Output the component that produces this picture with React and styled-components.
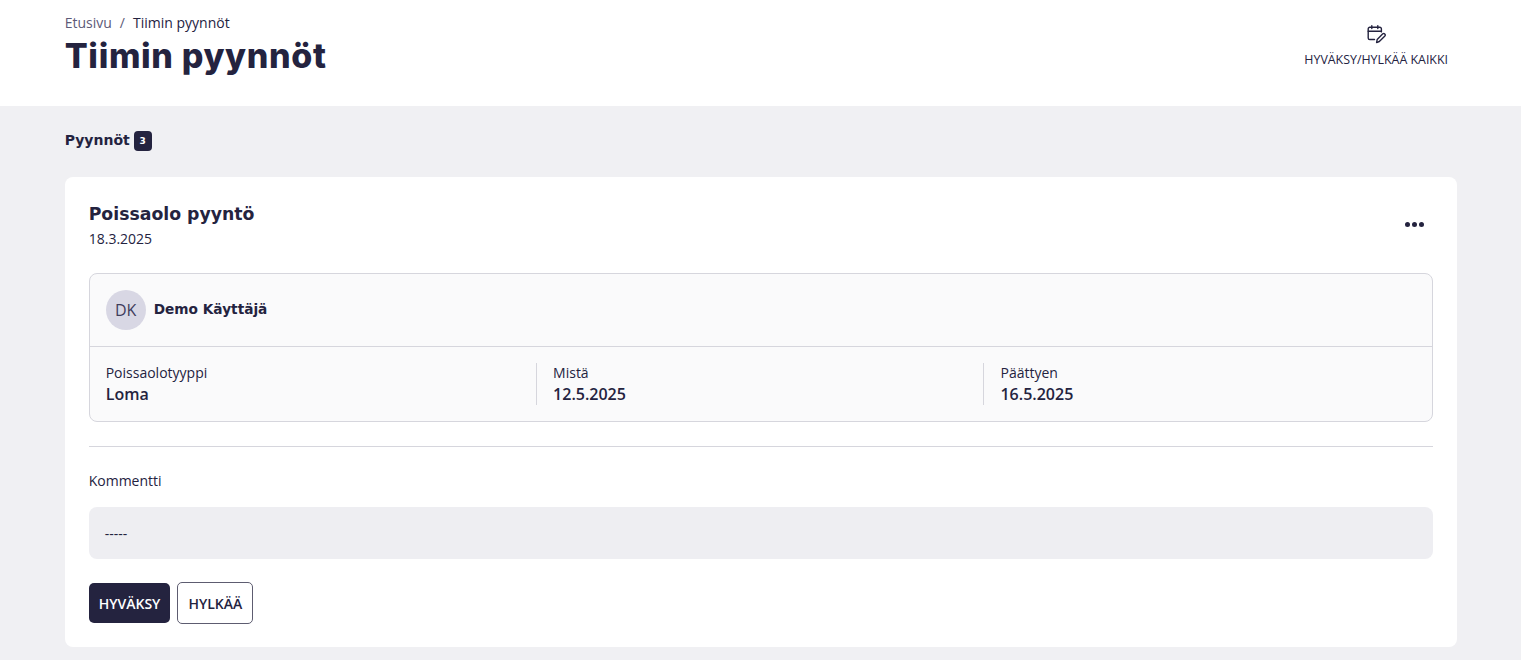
import * as React from "react";
import styled, { createGlobalStyle } from "styled-components";

const INK = "#24233f";
const HEAD = `"DejaVu Sans", Inter, sans-serif`;

const GlobalStyle = createGlobalStyle`
  html, body {
    margin: 0;
    padding: 0;
    height: 100%;
    overflow: hidden;
    background: #f0f0f3;
    color: ${INK};
    font-family: "Open Sans", "Noto Sans", sans-serif;
  }
  * { box-sizing: border-box; }
`;

const Header = styled.header`
  display: flex;
  justify-content: space-between;
  height: 106px;
  padding: 14px 64px 0 64.7px;
  background: #fff;
`;

const TitleBox = styled.div`
  display: flex;
  flex-direction: column;
`;

const Crumbs = styled.div`
  display: flex;
  gap: 8px;
  font-size: 14px;
  line-height: 18px;
  color: ${INK};
  span.first { color: #5d5a78; }
  span.sep { color: #5d5a78; }
`;

const Title = styled.h1`
  margin: 2px 0 0;
  font-family: Inter, sans-serif;
  font-optical-sizing: none;
  font-size: 34px;
  line-height: 44px;
  font-weight: 800;
  letter-spacing: 0.65px;
  color: ${INK};
`;

const BulkAction = styled.button`
  display: flex;
  flex-direction: column;
  align-items: center;
  align-self: flex-start;
  gap: 7px;
  margin-top: 10px;
  padding: 0 9px;
  border: 0;
  background: none;
  font-family: inherit;
  font-size: 12.4px;
  line-height: 17px;
  font-weight: 500;
  color: ${INK};
`;

const Main = styled.main`
  padding: 25px 64px 0 64.7px;
`;

const TabRow = styled.div`
  display: flex;
  align-items: center;
  gap: 4px;
  height: 20px;
  font-family: ${HEAD};
  font-size: 14px;
  font-weight: 700;
`;

const TabLabel = styled.span`
  margin-top: -2px;
`;

const Count = styled.span`
  display: inline-flex;
  align-items: center;
  justify-content: center;
  width: 18px;
  height: 20px;
  border-radius: 4px;
  background: ${INK};
  color: #fff;
  font-size: 9px;
  font-weight: 700;
`;

const Card = styled.section`
  margin-top: 26px;
  padding: 24px;
  height: 470px;
  background: #fff;
  border-radius: 8px;
`;

const CardTop = styled.div`
  display: flex;
  justify-content: space-between;
  height: 72px;
`;

const CardTitle = styled.h2`
  margin: 0;
  font-family: ${HEAD};
  font-size: 17.3px;
  line-height: 26px;
  font-weight: 700;
`;

const CardDate = styled.div`
  margin-top: 2px;
  font-size: 14px;
  line-height: 20px;
`;

const MoreButton = styled.button`
  display: flex;
  align-items: center;
  gap: 2px;
  align-self: flex-start;
  height: 8px;
  margin: 19px 9px 0 0;
  padding: 0;
  border: 0;
  background: none;
  i {
    width: 5px;
    height: 5px;
    border-radius: 50%;
    background: ${INK};
  }
`;

const InfoBox = styled.div`
  height: 149px;
  border: 1px solid #d6d6dd;
  border-radius: 8px;
  background: #fafafb;
`;

const UserRow = styled.div`
  display: flex;
  align-items: center;
  gap: 8px;
  height: 73px;
  padding: 0 16px;
  border-bottom: 1px solid #d6d6dd;
`;

const Avatar = styled.div`
  display: flex;
  align-items: center;
  justify-content: center;
  width: 40px;
  height: 40px;
  border-radius: 50%;
  background: #d8d7e4;
  font-size: 16px;
  color: #3f3d5c;
`;

const UserName = styled.div`
  margin-top: -2px;
  font-family: ${HEAD};
  font-size: 13.7px;
  font-weight: 700;
`;

const Details = styled.div`
  display: grid;
  grid-template-columns: 446.4px 447.4px 1fr;
  padding-top: 16px;
`;

const Detail = styled.div`
  height: 42px;
  padding-left: 16px;
  border-left: ${(p) => (p.$first ? "0" : "1px solid #d6d6dd")};
`;

const DetailLabel = styled.div`
  font-size: 14px;
  line-height: 20px;
`;

const DetailValue = styled.div`
  font-size: 16px;
  line-height: 22px;
  font-weight: 600;
`;

const Rule = styled.hr`
  margin: 24px 0 0;
  border: 0;
  border-top: 1px solid #d6d6dd;
`;

const CommentLabel = styled.div`
  margin-top: 24px;
  font-size: 14px;
  line-height: 20px;
`;

const CommentBox = styled.div`
  display: flex;
  align-items: center;
  height: 52px;
  margin-top: 16px;
  padding: 0 16px;
  border-radius: 8px;
  background: #eeeef2;
  font-size: 14px;
`;

const Actions = styled.div`
  display: flex;
  align-items: center;
  gap: 7px;
  margin-top: 23px;
`;

const Button = styled.button`
  height: ${(p) => (p.$primary ? "40px" : "42px")};
  padding: 0 10px;
  border: ${(p) => (p.$primary ? "0" : "1px solid #5d5c70")};
  border-radius: 5px;
  background: ${(p) => (p.$primary ? INK : "#fff")};
  color: ${(p) => (p.$primary ? "#fff" : INK)};
  font-family: inherit;
  font-size: 14px;
  font-weight: 600;
`;

const CalendarPenIcon = () => (
  <svg width="20" height="20" viewBox="0 0 20 20" fill="none" stroke={INK} strokeWidth="1.4" strokeLinecap="round" strokeLinejoin="round">
    <path d="M8.5 15.5H3.8a1.6 1.6 0 0 1-1.6-1.6V4.9a1.6 1.6 0 0 1 1.6-1.6h10a1.6 1.6 0 0 1 1.6 1.6v3" />
    <path d="M2.2 7.2h13.2M5.8 1.6v3M11.8 1.6v3" />
    <path d="M10.6 18.6l.6-3.2 5.6-5.6a1.5 1.5 0 0 1 2.1 2.1l-5.6 5.6z" />
  </svg>
);

const App = () => {
  return (
    <>
      <GlobalStyle />
      <Header>
        <TitleBox>
          <Crumbs>
            <span className="first">Etusivu</span>
            <span className="sep">/</span>
            <span>Tiimin pyynnöt</span>
          </Crumbs>
          <Title>Tiimin pyynnöt</Title>
        </TitleBox>
        <BulkAction>
          <CalendarPenIcon />
          HYVÄKSY/HYLKÄÄ KAIKKI
        </BulkAction>
      </Header>
      <Main>
        <TabRow>
          <TabLabel>Pyynnöt</TabLabel>
          <Count>3</Count>
        </TabRow>
        <Card>
          <CardTop>
            <div>
              <CardTitle>Poissaolo pyyntö</CardTitle>
              <CardDate>18.3.2025</CardDate>
            </div>
            <MoreButton aria-label="Lisää">
              <i />
              <i />
              <i />
            </MoreButton>
          </CardTop>
          <InfoBox>
            <UserRow>
              <Avatar>DK</Avatar>
              <UserName>Demo Käyttäjä</UserName>
            </UserRow>
            <Details>
              <Detail $first>
                <DetailLabel>Poissaolotyyppi</DetailLabel>
                <DetailValue>Loma</DetailValue>
              </Detail>
              <Detail>
                <DetailLabel>Mistä</DetailLabel>
                <DetailValue>12.5.2025</DetailValue>
              </Detail>
              <Detail>
                <DetailLabel>Päättyen</DetailLabel>
                <DetailValue>16.5.2025</DetailValue>
              </Detail>
            </Details>
          </InfoBox>
          <Rule />
          <CommentLabel>Kommentti</CommentLabel>
          <CommentBox>-----</CommentBox>
          <Actions>
            <Button $primary>HYVÄKSY</Button>
            <Button>HYLKÄÄ</Button>
          </Actions>
        </Card>
      </Main>
    </>
  );
};

export default App;
